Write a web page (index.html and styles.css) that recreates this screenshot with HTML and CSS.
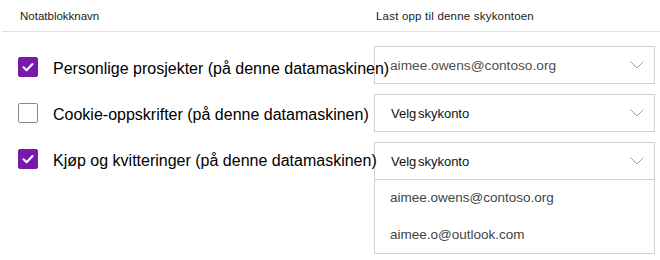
FILE: index.html
```html
<!DOCTYPE html>
<html lang="no">
<head>
<meta charset="utf-8">
<link rel="stylesheet" href="styles.css">
</head>
<body>
<div class="page">
  <div class="header">
    <div class="col-name">Notatblokknavn</div>
    <div class="col-account">Last opp til denne skykontoen</div>
  </div>
  <div class="body">
    <div class="names">
      <label class="row">
        <span class="check checked"><svg viewBox="0 0 20 20" width="20" height="20"><path d="M5.5 10.2 L8.6 13.2 L14.5 7" fill="none" stroke="#fff" stroke-width="2" stroke-linecap="round" stroke-linejoin="round"/></svg></span>
        <span class="label">Personlige prosjekter (på denne datamaskinen)</span>
      </label>
      <label class="row">
        <span class="check"></span>
        <span class="label">Cookie-oppskrifter (på denne datamaskinen)</span>
      </label>
      <label class="row">
        <span class="check checked"><svg viewBox="0 0 20 20" width="20" height="20"><path d="M5.5 10.2 L8.6 13.2 L14.5 7" fill="none" stroke="#fff" stroke-width="2" stroke-linecap="round" stroke-linejoin="round"/></svg></span>
        <span class="label">Kjøp og kvitteringer (på denne datamaskinen)</span>
      </label>
    </div>
    <div class="accounts">
      <div class="select">
        <div class="field">
          <span class="value email">aimee.owens@contoso.org</span>
          <svg class="chev" viewBox="0 0 14 8" width="14" height="8"><path d="M0.5 0.5 L7 7 L13.5 0.5" fill="none" stroke="#a0a0a0" stroke-width="1"/></svg>
        </div>
      </div>
      <div class="select">
        <div class="field">
          <span class="value placeholder">Velg skykonto</span>
          <svg class="chev" viewBox="0 0 14 8" width="14" height="8"><path d="M0.5 0.5 L7 7 L13.5 0.5" fill="none" stroke="#a0a0a0" stroke-width="1"/></svg>
        </div>
      </div>
      <div class="select open">
        <div class="field">
          <span class="value placeholder">Velg skykonto</span>
          <svg class="chev" viewBox="0 0 14 8" width="14" height="8"><path d="M0.5 0.5 L7 7 L13.5 0.5" fill="none" stroke="#a0a0a0" stroke-width="1"/></svg>
        </div>
        <ul class="options">
          <li>aimee.owens@contoso.org</li>
          <li>aimee.o@outlook.com</li>
        </ul>
      </div>
    </div>
  </div>
</div>
</body>
</html>
```
FILE: styles.css
```css
* { box-sizing: border-box; }
html, body { margin: 0; padding: 0; background: #fff; }
body {
  font-family: "Liberation Sans", Arial, sans-serif;
  color: #000;
  width: 660px;
  height: 260px;
  overflow: hidden;
}
.header {
  display: grid;
  grid-template-columns: 374px 286px;
  height: 32px;
  margin-left: 2px;
  border-bottom: 1px solid #e1e1e1;
  font-size: 11.5px;
  color: #1a1a1a;
  align-items: start;
  padding-top: 10px;
}
.header .col-name { padding-left: 18px; }
.header .col-account { padding-left: 0; letter-spacing: 0.2px; }
.body {
  display: grid;
  grid-template-columns: 374px 281px;
}
.names {
  display: flex;
  flex-direction: column;
  gap: 26px;
  padding-top: 25px;
  padding-left: 18px;
}
.row {
  display: flex;
  align-items: center;
  height: 20px;
  gap: 15px;
  white-space: nowrap;
}
.check {
  flex: none;
  width: 20px;
  height: 20px;
  border: 1px solid #8a8a8a;
  border-radius: 2px;
  background: #fff;
  display: flex;
}
.check.checked {
  border-color: #7719aa;
  background: #7719aa;
}
.check svg { margin: -1px; }
.label {
  font-size: 16px;
  line-height: 20px;
  position: relative;
  top: 2px;
}
.accounts {
  display: flex;
  flex-direction: column;
  gap: 10px;
  padding-top: 14px;
}
.select {
  border: 1px solid #d2d2d2;
  background: transparent;
}
.field {
  height: 36px;
  display: flex;
  align-items: center;
  justify-content: space-between;
  padding: 0 10px 0 16px;
}
.value { font-size: 14px; }
.email { font-size: 13.7px; color: #505050; margin-left: -1px; }
.placeholder { font-size: 13px; color: #111; word-spacing: -2px; }
.chev { margin-top: -1px; }
.options {
  list-style: none;
  margin: 0;
  padding: 0;
  border-top: 1px solid #d2d2d2;
}
.options li {
  height: 36.5px;
  line-height: 36px;
  padding-left: 15px;
  font-size: 13.5px;
  color: #444;
}
```
